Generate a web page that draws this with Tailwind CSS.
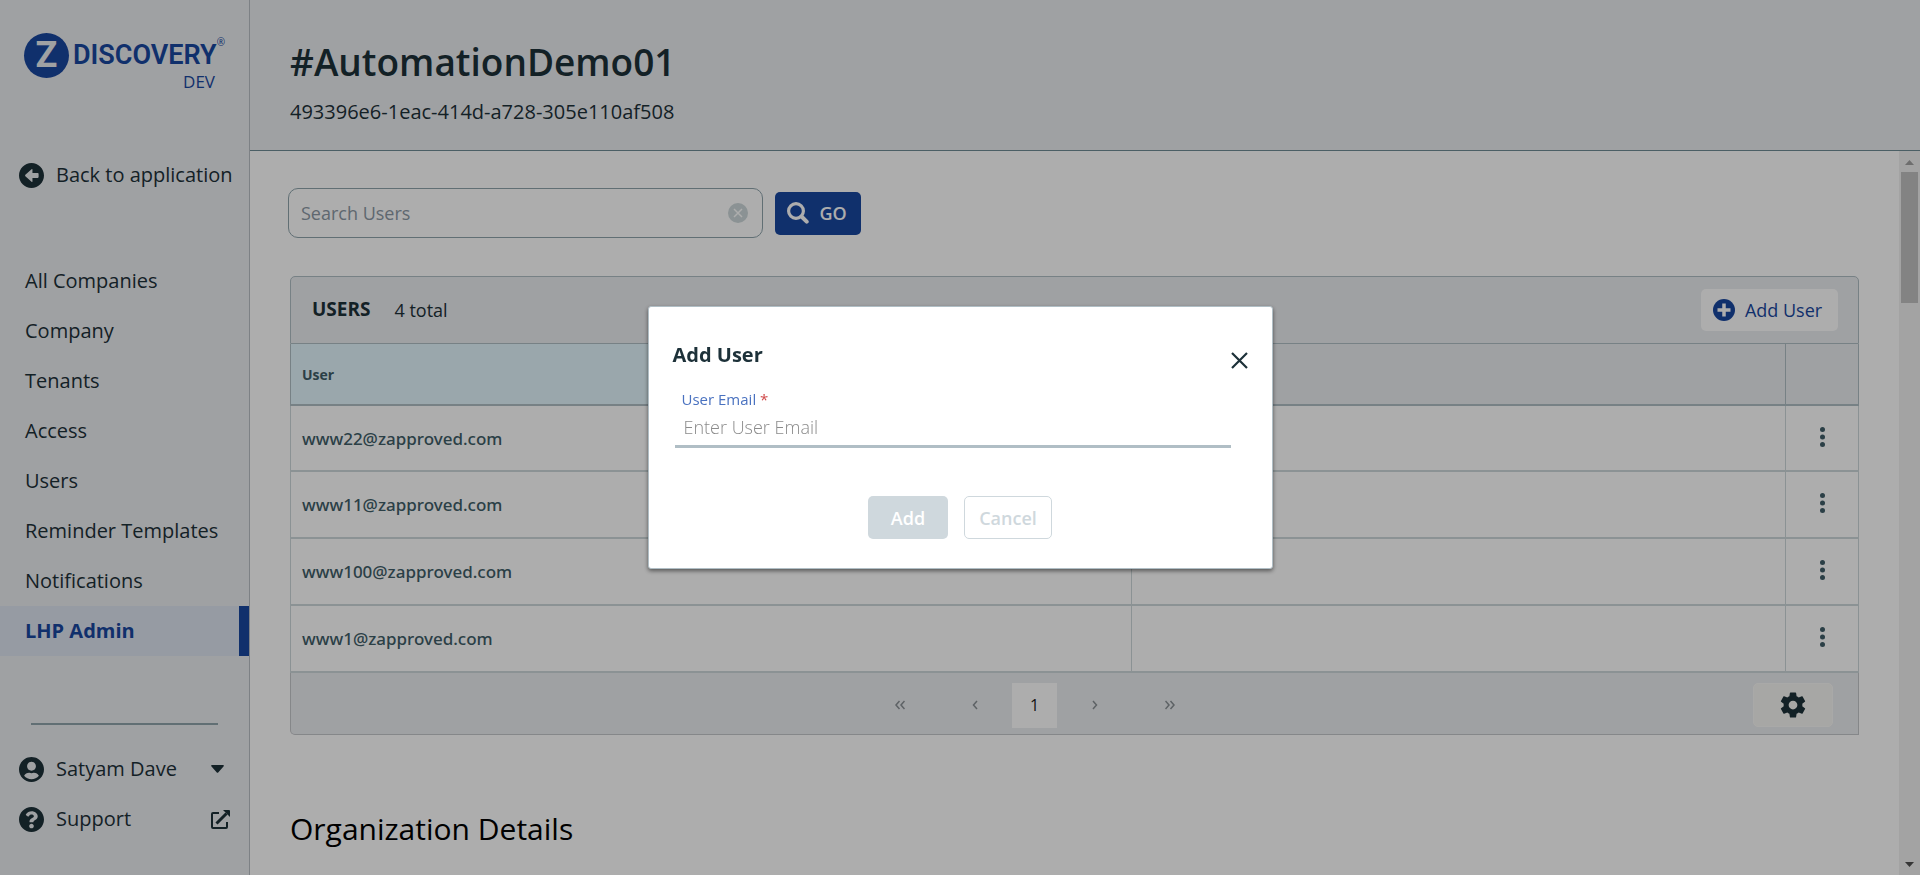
<!DOCTYPE html>
<html lang="en">
<head>
<meta charset="utf-8">
<meta name="viewport" content="width=device-width, initial-scale=1">
<title>Users - LHP Admin</title>
<script src="https://cdn.jsdelivr.net/npm/@tailwindcss/browser@4"></script>
</head>
<body class="flex h-screen overflow-hidden bg-white font-['Open_Sans','Noto_Sans',sans-serif] text-xl text-[#1d3139]">

<!-- Sidebar -->
<aside class="flex w-[250px] shrink-0 flex-col border-r border-[#b9bfc5] bg-[#ebedf0]">
  <a href="#" class="block pt-8 pl-6 text-[#1947a0]" aria-label="Z Discovery Dev">
    <span class="flex items-center gap-1">
      <span class="flex size-[45px] items-center justify-center rounded-full bg-[#1947a0] font-['Roboto',sans-serif] text-4xl font-bold text-[#ebedf0]">Z</span>
      <span class="flex items-start">
        <span class="font-['Roboto',sans-serif] text-[27px] leading-[46px] font-semibold">DISCOVERY</span>
        <span class="pt-1 text-[10px] leading-3">®</span>
      </span>
    </span>
    <span class="-mt-2 block pr-[34px] text-right text-[17px] leading-6">DEV</span>
  </a>
  <a href="#" class="mt-14 flex h-[50px] items-center gap-3 pl-[19px] whitespace-nowrap">
    <svg class="size-[25px] shrink-0" viewBox="8 8 496 496" fill="currentColor"><path d="M256 504C119 504 8 393 8 256S119 8 256 8s248 111 248 248-111 248-248 248zM275 370v-66h106q16 0 16-16v-64q0-16-16-16H275v-66q0-22-18-8L134 243q-12 13 0 26l123 109q18 14 18-8z"/></svg>
    <span>Back to application</span>
  </a>
  <nav class="mt-14 flex flex-col">
    <a href="#" class="flex h-[50px] items-center pl-[25px]">All Companies</a>
    <a href="#" class="flex h-[50px] items-center pl-[25px]">Company</a>
    <a href="#" class="flex h-[50px] items-center pl-[25px]">Tenants</a>
    <a href="#" class="flex h-[50px] items-center pl-[25px]">Access</a>
    <a href="#" class="flex h-[50px] items-center pl-[25px]">Users</a>
    <a href="#" class="flex h-[50px] items-center pl-[25px]">Reminder Templates</a>
    <a href="#" class="flex h-[50px] items-center pl-[25px]">Notifications</a>
    <a href="#" aria-current="page" class="flex h-[50px] items-center border-r-10 border-[#1947a0] bg-[#dde5f1] pl-[25px] font-bold text-[#1947a0]">LHP Admin</a>
  </nav>
  <div class="mt-auto pb-[31px]">
    <hr class="mr-[31px] mb-[19px] ml-[31px] border-t-2 border-[#8fa4ac]">
    <button type="button" class="flex h-[50px] w-full items-center gap-3 pr-[25px] pl-[19px] text-left">
      <svg class="size-[25px] shrink-0" viewBox="0 8 496 496" fill="currentColor"><path d="M248 8C111 8 0 119 0 256s111 248 248 248 248-111 248-248S385 8 248 8zm0 96c48.600 0 88 39.400 88 88s-39.400 88-88 88-88-39.400-88-88 39.400-88 88-88zm0 344c-58.700 0-111.300-26.600-146.500-68.200 18.800-35.400 55.600-59.800 98.500-59.800 2.400 0 4.800.4 7.100 1.100 13 4.200 26.600 6.900 40.900 6.900 14.300 0 28-2.700 40.900-6.900 2.300-.7 4.700-1.100 7.100-1.100 42.900 0 79.700 24.400 98.500 59.800C359.300 421.400 306.700 448 248 448z"/></svg>
      <span class="grow">Satyam Dave</span>
      <svg class="h-2 w-[13px]" viewBox="0 0 13 8" fill="currentColor"><path d="M1 0h11q1.500.3.500 1.500L7.200 7.400q-.7.800-1.400 0L.5 1.500Q-.5.300 1 0z"/></svg>
    </button>
    <a href="#" class="flex h-[50px] items-center gap-3 pr-[19px] pl-[19px]">
      <svg class="size-[25px] shrink-0" viewBox="8 8 496 496" fill="currentColor"><path d="M504 256c0 137-111 248-248 248S8 393 8 256C8 119.100 119 8 256 8s248 111.100 248 248zM262.700 90c-54.500 0-89.300 23-116.500 63.800-3.500 5.300-2.400 12.400 2.700 16.300l34.700 26.300c5.200 3.900 12.600 3 16.700-2.100 17.900-22.700 30.100-35.800 57.300-35.800 20.400 0 45.700 13.100 45.700 33 0 15-12.400 22.700-32.500 34C247.100 238.500 216 254.900 216 296v4c0 6.600 5.400 12 12 12h56c6.600 0 12-5.400 12-12v-1.300c0-28.500 83.200-29.600 83.200-106.700 0-58-60.200-102-116.500-102zM256 338c-25.400 0-46 20.600-46 46 0 25.400 20.600 46 46 46s46-20.600 46-46c0-25.400-20.600-46-46-46z"/></svg>
      <span class="grow">Support</span>
      <svg class="size-[19px]" viewBox="0 0 19 19" fill="none" stroke="currentColor" stroke-width="2"><path d="M8 3H2Q1 3 1 4v13q0 1 1 1h13q1 0 1-1v-5"/><path d="M5.500 13.500L15.500 3.500" stroke-width="3"/><path d="M12 0h6q1 0 1 1v6z" fill="currentColor" stroke="none"/></svg>
    </a>
  </div>
</aside>

<div class="flex min-w-0 grow flex-col">
  <header class="flex h-[151px] shrink-0 flex-col border-b border-[#6f8d96] bg-[#ebedf0] px-10 pt-[34px]">
    <h1 class="text-[37px] leading-[56px] font-semibold">#AutomationDemo01</h1>
    <p class="mt-[6px] leading-8">493396e6-1eac-414d-a728-305e110af508</p>
  </header>

  <div class="flex min-h-0 grow">
    <main class="min-w-0 grow overflow-hidden px-10 pt-[37px]">
      <form class="-ml-0.5 flex items-center gap-3 text-lg">
        <div class="flex h-[50px] w-[475px] items-center rounded-[10px] border border-[#8fa4ac] pr-[14px] pl-3">
          <input type="text" aria-label="Search Users" placeholder="Search Users" class="min-w-0 grow bg-transparent outline-none placeholder:text-[#8c99a5]">
          <button type="button" aria-label="Clear search"><svg class="size-5" viewBox="0 0 20 20"><circle cx="10" cy="10" r="10" fill="#cdd8da"/><path d="M6 6l8 8M14 6l-8 8" stroke="#fff" stroke-width="1.500"/></svg></button>
        </div>
        <button type="button" class="flex h-[43px] w-[86px] items-center justify-center gap-[10px] rounded-[5px] bg-[#1947a0] pr-[2px] font-semibold text-white">
          <svg class="size-[22px]" viewBox="0 0 22 22" fill="none" stroke="currentColor" stroke-width="3.200"><circle cx="9" cy="9" r="7.400"/><path d="M14.500 14.500l5.200 5.200" stroke-width="4" stroke-linecap="round"/></svg>
          GO
        </button>
      </form>

      <section class="mt-[38px] text-lg">
        <div class="flex h-[68px] items-center rounded-t-[5px] border border-[#b0bec5] bg-[#ebedf0] pr-5 pl-[21px]">
          <h2 class="text-[19px] font-bold">USERS</h2>
          <span class="ml-6 grow">4 total</span>
          <button type="button" class="flex h-[42px] w-[137px] items-center justify-center gap-[10px] rounded-[5px] bg-white pr-1 font-medium text-[#1947a0]">
            <svg class="size-[22px]" viewBox="0 0 22 22"><circle cx="11" cy="11" r="11" fill="currentColor"/><path d="M11 4.500v13M4.500 11h13" stroke="#fff" stroke-width="3.500"/></svg>
            Add User
          </button>
        </div>
        <table class="w-full table-fixed border-separate border-spacing-0 text-[17px] text-[#405d68]">
          <thead>
            <tr class="h-[62px] bg-[#ebedf0] text-sm">
              <th scope="col" class="w-[53.67%] border-r border-b-2 border-l border-[#b0bec5] bg-[#e4f7fe] pt-[2px] pl-[11px] text-left font-bold">User</th>
              <th class="border-r border-b-2 border-[#b0bec5]"></th>
              <th class="w-[73px] border-r border-b-2 border-[#b0bec5]"></th>
            </tr>
          </thead>
          <tbody class="font-['Noto_Sans','Open_Sans',sans-serif] font-medium">
            <tr class="h-[66px]">
              <td class="border-r border-b-2 border-l border-[#cdd8da] pt-[2px] pl-[11px]">www22@zapproved.com</td>
              <td class="border-r border-b-2 border-[#cdd8da]"></td>
              <td class="border-r border-b-2 border-[#cdd8da] pb-[3px] text-center"><button type="button" aria-label="Row actions" class="p-2 align-middle"><svg class="h-5 w-[5px]" viewBox="0 0 5 20" fill="currentColor"><circle cx="2.500" cy="2.500" r="2.500"/><circle cx="2.500" cy="10" r="2.500"/><circle cx="2.500" cy="17.500" r="2.500"/></svg></button></td>
            </tr>
            <tr class="h-[67px]">
              <td class="border-r border-b-2 border-l border-[#cdd8da] pt-[2px] pl-[11px]">www11@zapproved.com</td>
              <td class="border-r border-b-2 border-[#cdd8da]"></td>
              <td class="border-r border-b-2 border-[#cdd8da] pb-[3px] text-center"><button type="button" aria-label="Row actions" class="p-2 align-middle"><svg class="h-5 w-[5px]" viewBox="0 0 5 20" fill="currentColor"><circle cx="2.500" cy="2.500" r="2.500"/><circle cx="2.500" cy="10" r="2.500"/><circle cx="2.500" cy="17.500" r="2.500"/></svg></button></td>
            </tr>
            <tr class="h-[67px]">
              <td class="border-r border-b-2 border-l border-[#cdd8da] pt-[2px] pl-[11px]">www100@zapproved.com</td>
              <td class="border-r border-b-2 border-[#cdd8da]"></td>
              <td class="border-r border-b-2 border-[#cdd8da] pb-[3px] text-center"><button type="button" aria-label="Row actions" class="p-2 align-middle"><svg class="h-5 w-[5px]" viewBox="0 0 5 20" fill="currentColor"><circle cx="2.500" cy="2.500" r="2.500"/><circle cx="2.500" cy="10" r="2.500"/><circle cx="2.500" cy="17.500" r="2.500"/></svg></button></td>
            </tr>
            <tr class="h-[67px]">
              <td class="border-r border-b-2 border-l border-[#cdd8da] pt-[2px] pl-[11px]">www1@zapproved.com</td>
              <td class="border-r border-b-2 border-[#cdd8da]"></td>
              <td class="border-r border-b-2 border-[#cdd8da] pb-[3px] text-center"><button type="button" aria-label="Row actions" class="p-2 align-middle"><svg class="h-5 w-[5px]" viewBox="0 0 5 20" fill="currentColor"><circle cx="2.500" cy="2.500" r="2.500"/><circle cx="2.500" cy="10" r="2.500"/><circle cx="2.500" cy="17.500" r="2.500"/></svg></button></td>
            </tr>
          </tbody>
        </table>
        <div class="flex h-[62px] items-center rounded-bl-[5px] border border-t-0 border-[#c5c7ca] bg-[#ebedf0] pt-[3px] pr-[25px]">
          <nav aria-label="Pages" class="flex grow items-center justify-center pl-[25px] text-[#8a9196]">
            <button type="button" aria-label="First page" class="flex w-[75px] justify-center"><svg class="size-[10px]" viewBox="0 0 10 10" fill="none" stroke="currentColor" stroke-width="1.500"><path d="M4.500 1L1 5l3.500 4M9.500 1L6 5l3.500 4"/></svg></button>
            <button type="button" aria-label="Previous page" class="flex w-[75px] justify-center"><svg class="size-[10px]" viewBox="0 0 10 10" fill="none" stroke="currentColor" stroke-width="1.500"><path d="M7 1L3.500 5 7 9"/></svg></button>
            <button type="button" aria-current="page" class="size-[45px] bg-white text-base text-[#1d1d1d]">1</button>
            <button type="button" aria-label="Next page" class="flex w-[75px] justify-center"><svg class="size-[10px]" viewBox="0 0 10 10" fill="none" stroke="currentColor" stroke-width="1.500"><path d="M3 1l3.500 4L3 9"/></svg></button>
            <button type="button" aria-label="Last page" class="flex w-[75px] justify-center"><svg class="size-[10px]" viewBox="0 0 10 10" fill="none" stroke="currentColor" stroke-width="1.500"><path d="M.5 1L4 5 .5 9M5.500 1L9 5 5.500 9"/></svg></button>
          </nav>
          <button type="button" aria-label="Table settings" class="flex h-11 w-20 items-center justify-center rounded-[5px] border border-[#fafaf8] bg-[#f7f7f4] text-[#1d3139]">
            <svg class="size-[30px]" viewBox="0 0 24 24" fill="currentColor"><path d="M19.430 12.980c.04-.32.070-.64.070-.98s-.03-.66-.07-.98l2.110-1.650c.19-.15.240-.42.120-.64l-2-3.460c-.12-.22-.39-.3-.61-.22l-2.490 1c-.52-.4-1.080-.73-1.690-.98l-.38-2.650C14.460 2.180 14.250 2 14 2h-4c-.25 0-.46.180-.49.420l-.38 2.650c-.61.250-1.170.590-1.690.980l-2.490-1c-.23-.09-.49 0-.61.220l-2 3.460c-.13.220-.07.490.120.640l2.110 1.650c-.04.320-.07.650-.07.980s.03.660.070.980l-2.110 1.650c-.19.150-.24.420-.12.640l2 3.460c.12.220.390.300.610.220l2.490-1c.52.400 1.080.730 1.690.980l.38 2.650c.03.240.240.420.490.420h4c.25 0 .46-.18.490-.42l.38-2.650c.61-.25 1.170-.59 1.690-.98l2.490 1c.23.090.490 0 .61-.22l2-3.460c.12-.22.070-.49-.12-.64l-2.110-1.650zM12 15.500c-1.930 0-3.500-1.570-3.500-3.500s1.570-3.500 3.500-3.500 3.500 1.570 3.500 3.500-1.570 3.500-3.500 3.500z"/></svg>
          </button>
        </div>
      </section>

      <h2 class="mt-[72px] text-[30px] leading-[44px] text-black">Organization Details</h2>
    </main>

    <!-- Scroll track of the main pane -->
    <div class="flex w-[21px] shrink-0 flex-col items-center bg-[#f1f1f1]" aria-hidden="true">
      <svg class="h-[21px] w-[9px] text-[#a3a3a3]" viewBox="0 0 9 21" fill="currentColor"><path d="M4.500 9L9 14H0z"/></svg>
      <div class="h-[131px] w-[17px] bg-[#c1c1c1]"></div>
      <svg class="mt-auto h-[21px] w-[9px] text-[#505050]" viewBox="0 0 9 21" fill="currentColor"><path d="M4.500 13L9 8H0z"/></svg>
    </div>
  </div>
</div>

<!-- Add User dialog -->
<div class="fixed inset-0 flex items-center justify-center bg-black/32">
  <div role="dialog" aria-modal="true" aria-labelledby="dialog-title" class="flex w-[625px] flex-col rounded-[3px] border border-[#b0bec5] bg-white pt-[33px] pr-6 pb-[29px] pl-6 shadow-[0_2px_4px_rgba(0,0,0,0.5)]">
    <div class="flex items-start justify-between">
      <h2 id="dialog-title" class="leading-[30px] font-bold">Add User</h2>
      <button type="button" aria-label="Close" class="pt-3"><svg class="size-[17px]" viewBox="0 0 17 17" stroke="currentColor" stroke-width="2.200"><path d="M1 1l15 15M16 1L1 16"/></svg></button>
    </div>
    <form class="ml-[2px]">
      <div class="mt-[19px] mr-[17px] flex flex-col border-b-3 border-[#b0bec5]">
        <label for="user-email" class="pl-[7px] text-[15px] leading-5 text-[#4a72c0]">User Email <span class="text-[#d04848]">*</span></label>
        <input id="user-email" type="email" placeholder="Enter User Email" class="h-9 bg-transparent px-[9px] text-lg font-light outline-none placeholder:text-[#8b8b8b]">
      </div>
      <div class="mt-12 flex justify-center gap-4 pr-[2px] text-lg font-semibold">
        <button type="button" disabled class="h-[43px] w-20 rounded-[5px] bg-[#cfd8dd] text-white">Add</button>
        <button type="button" class="h-[43px] w-[88px] rounded-[5px] border border-[#cfd8dd] bg-white text-[#cfd8dd]">Cancel</button>
      </div>
    </form>
  </div>
</div>
</body>
</html>
